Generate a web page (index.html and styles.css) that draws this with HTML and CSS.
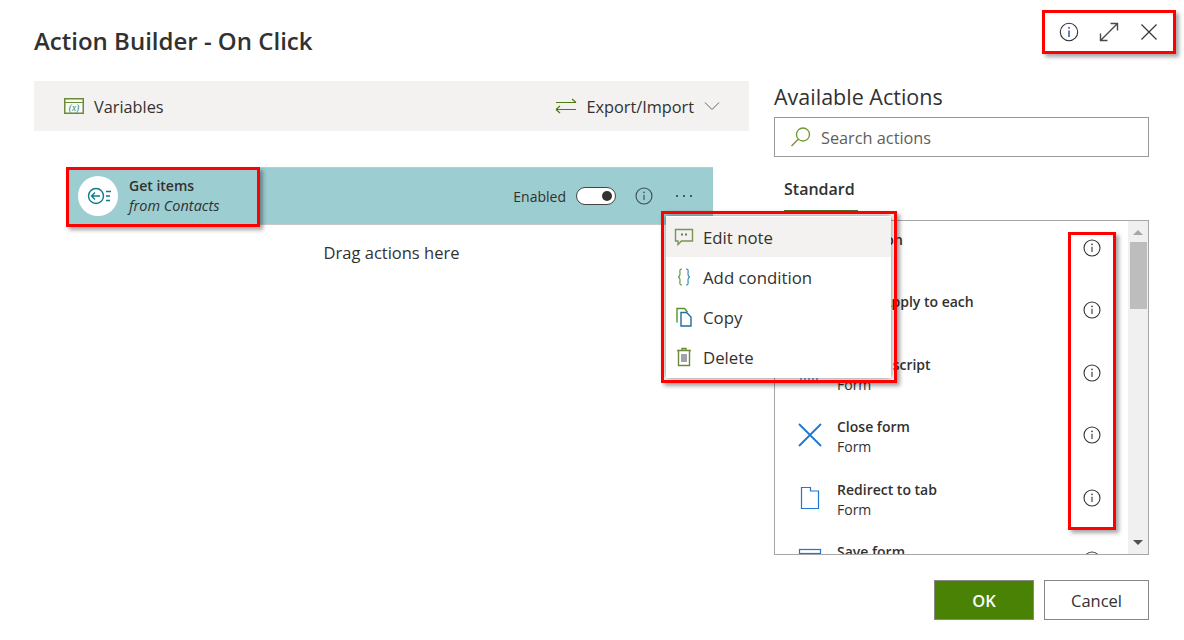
FILE: index.html
```html
<!DOCTYPE html>
<html lang="en">
<head>
<meta charset="utf-8">
<title>Action Builder - On Click</title>
<link rel="stylesheet" href="styles.css">
</head>
<body>
<div class="dialog">
  <header class="head">
    <h1 class="title">Action Builder - On Click</h1>
    <div class="head-tools">
      <svg class="ic24" viewBox="0 0 24 24"><circle cx="12" cy="12" r="8.700" fill="none" stroke="#333" stroke-width="1.100"/><path d="M12 10.500v6.500" stroke="#1f3a8a" stroke-width="1.300"/><circle cx="12" cy="7.800" r=".9" fill="#1f3a8a"/></svg>
      <svg class="ic24" viewBox="0 0 24 24"><path d="M3.500 20.500 20.500 3.500M13.500 3.500h7v7M3.500 13.500v7h7" fill="none" stroke="#4a4a42" stroke-width="1.400"/></svg>
      <svg class="ic24" viewBox="0 0 24 24"><path d="M4.500 4.500l15 15M19.500 4.500l-15 15" fill="none" stroke="#333" stroke-width="1.200"/></svg>
    </div>
  </header>

  <main class="body">
    <section class="left">
      <div class="toolbar">
        <div class="tool">
          <svg class="ic-var" viewBox="0 0 20 16"><rect x=".75" y=".75" width="18.500" height="14.500" fill="#fafaf5" stroke="#6b8a3a" stroke-width="1.500"/><path d="M1 4.500h18" stroke="#6b8a3a"/><text x="10" y="12.500" text-anchor="middle" class="var-x">(x)</text></svg>
          <span class="tool-label">Variables</span>
        </div>
        <div class="tool">
          <svg class="ic-swap" viewBox="0 0 22 16"><path d="M1 4.500h20M17 1l4 3.500M21 11.500H1M5 8l-4 3.500M5 15l-4-3.500" fill="none" stroke="#4a7c10" stroke-width="1.200"/></svg>
          <span class="tool-label">Export/Import</span>
          <svg class="ic-chev" viewBox="0 0 16 10"><path d="M1 1.500l7 7 7-7" fill="none" stroke="#666" stroke-width="1"/></svg>
        </div>
      </div>

      <div class="card">
        <div class="card-badge">
          <svg class="ic-get" viewBox="0 0 26 20"><circle cx="10" cy="10" r="7.500" fill="none" stroke="#0f7b8a" stroke-width="1.400"/><path d="M14 10H6M9 6.500 5.500 10 9 13.500" fill="none" stroke="#0f7b8a" stroke-width="1.400"/><path d="M20 5.500h5M20 10h4M20 14.500h4" stroke="#0f7b8a" stroke-width="1.400"/></svg>
        </div>
        <div class="card-text">
          <div class="card-name">Get items</div>
          <div class="card-sub">from Contacts</div>
        </div>
        <div class="card-tools">
          <span class="enabled">Enabled</span>
          <span class="toggle"><span class="knob"></span></span>
          <svg class="ic-info" viewBox="0 0 20 20"><circle cx="10" cy="10" r="8" fill="none" stroke="#3c4a55" stroke-width="1.100"/><path d="M10 8.800v5.200" stroke="#3c4a55" stroke-width="1.100"/><circle cx="10" cy="6.400" r=".8" fill="#3c4a55"/></svg>
          <span class="dots"><i></i><i></i><i></i></span>
        </div>
      </div>
      <p class="drop">Drag actions here</p>
    </section>

    <aside class="right">
      <h2 class="avail">Available Actions</h2>
      <div class="search">
        <svg class="ic-search" viewBox="0 0 22 22"><circle cx="13" cy="8.500" r="6.500" fill="none" stroke="#6b9a2a" stroke-width="1.300"/><path d="M8.500 13 1.500 20" stroke="#8a8a30" stroke-width="1.500"/></svg>
        <span class="tool-label">Search actions</span>
      </div>
      <div class="tabs"><span class="tab">Standard</span></div>
      <div class="list">
        <div class="rows">
          <div class="row">
            <span class="row-icon"></span>
            <div class="row-text"><div class="row-name">Condition</div><div class="row-sub">Control</div></div>
            <svg class="ic-info" viewBox="0 0 20 20"><circle cx="10" cy="10" r="8" fill="none" stroke="#333" stroke-width="1.100"/><path d="M10 8.800v5.200" stroke="#333" stroke-width="1.100"/><circle cx="10" cy="6.400" r=".8" fill="#333"/></svg>
          </div>
          <div class="row">
            <span class="row-icon"></span>
            <div class="row-text"><div class="row-name">Loop - Apply to each</div><div class="row-sub">Control</div></div>
            <svg class="ic-info" viewBox="0 0 20 20"><circle cx="10" cy="10" r="8" fill="none" stroke="#333" stroke-width="1.100"/><path d="M10 8.800v5.200" stroke="#333" stroke-width="1.100"/><circle cx="10" cy="6.400" r=".8" fill="#333"/></svg>
          </div>
          <div class="row">
            <span class="row-icon"><svg class="ic-row" viewBox="0 0 24 24"><path d="M3 17v3M7 17v3M11 17v3M15 17v3M19 17v3" stroke="#2f7fd8" stroke-width="1.300"/><path d="M1 21.500h21" stroke="#8aa6d8" stroke-width="1.300"/></svg></span>
            <div class="row-text"><div class="row-name">Custom script</div><div class="row-sub">Form</div></div>
            <svg class="ic-info" viewBox="0 0 20 20"><circle cx="10" cy="10" r="8" fill="none" stroke="#333" stroke-width="1.100"/><path d="M10 8.800v5.200" stroke="#333" stroke-width="1.100"/><circle cx="10" cy="6.400" r=".8" fill="#333"/></svg>
          </div>
          <div class="row">
            <span class="row-icon"><svg class="ic-row" viewBox="0 0 24 24"><path d="M1 1l22 22M23 1 1 23" fill="none" stroke="#1a78d6" stroke-width="1.800"/></svg></span>
            <div class="row-text"><div class="row-name">Close form</div><div class="row-sub">Form</div></div>
            <svg class="ic-info" viewBox="0 0 20 20"><circle cx="10" cy="10" r="8" fill="none" stroke="#333" stroke-width="1.100"/><path d="M10 8.800v5.200" stroke="#333" stroke-width="1.100"/><circle cx="10" cy="6.400" r=".8" fill="#333"/></svg>
          </div>
          <div class="row">
            <span class="row-icon"><svg class="ic-row" viewBox="0 0 24 24"><path d="M3.500 1.500h9v3.500h8v17.500h-17z" fill="none" stroke="#1a78d6" stroke-width="1.200"/></svg></span>
            <div class="row-text"><div class="row-name">Redirect to tab</div><div class="row-sub">Form</div></div>
            <svg class="ic-info" viewBox="0 0 20 20"><circle cx="10" cy="10" r="8" fill="none" stroke="#333" stroke-width="1.100"/><path d="M10 8.800v5.200" stroke="#333" stroke-width="1.100"/><circle cx="10" cy="6.400" r=".8" fill="#333"/></svg>
          </div>
          <div class="row">
            <span class="row-icon"><svg class="ic-row" viewBox="0 0 24 24"><rect x="1.500" y="1.500" width="21" height="21" fill="none" stroke="#1a78d6" stroke-width="1.200"/><path d="M1.500 5.500h21" stroke="#1a78d6" stroke-width="1.200"/></svg></span>
            <div class="row-text"><div class="row-name">Save form</div><div class="row-sub">Form</div></div>
            <svg class="ic-info" viewBox="0 0 20 20"><circle cx="10" cy="10" r="8" fill="none" stroke="#333" stroke-width="1.100"/><path d="M10 8.800v5.200" stroke="#333" stroke-width="1.100"/><circle cx="10" cy="6.400" r=".8" fill="#333"/></svg>
          </div>
        </div>
        <div class="scrollbar">
          <span class="arrow-up"></span>
          <span class="thumb"></span>
          <span class="arrow-down"></span>
        </div>
      </div>
    </aside>
  </main>

  <footer class="foot">
    <button class="btn btn-ok">OK</button>
    <button class="btn">Cancel</button>
  </footer>
</div>

<ul class="menu">
  <li class="menu-item is-hover">
    <svg class="ic-menu" viewBox="0 0 20 20"><path d="M1.500 2.500h17v11.500H7.500l-3.500 3.500V14H1.500z" fill="none" stroke="#7a9455" stroke-width="1.400"/><path d="M8 6.500v2M12 6.500v2" stroke="#3f5f28" stroke-width="1.600"/></svg>
    Edit note
  </li>
  <li class="menu-item">
    <svg class="ic-menu" viewBox="0 0 20 20"><path d="M8 2C5 2 6 4.500 6 7c0 2-1.500 3-2 3 .5 0 2 1 2 3 0 2.500-1 5 2 5" fill="none" stroke="#6b9a3a" stroke-width="1.200"/><path d="M12 2c3 0 2 2.500 2 5 0 2 1.500 3 2 3-.5 0-2 1-2 3 0 2.500 1 5-2 5" fill="none" stroke="#3a8fb0" stroke-width="1.200"/></svg>
    Add condition
  </li>
  <li class="menu-item">
    <svg class="ic-menu" viewBox="0 0 20 20"><path d="M3 15.500V1.500h7.500l3 3.500" fill="none" stroke="#5a9228" stroke-width="1.400"/><path d="M7 5.500h5.500l4.500 4.500v9H7z" fill="#fff" stroke="#1f6f9a" stroke-width="1.400"/></svg>
    Copy
  </li>
  <li class="menu-item">
    <svg class="ic-menu" viewBox="0 0 20 20"><path d="M3 3.500h14M8 3.500V1.500h4v2" fill="none" stroke="#6b8a3a" stroke-width="1.400"/><path d="M4.500 4v14.500h11V4" fill="none" stroke="#6b8a3a" stroke-width="1.400"/><path d="M8 7v8M10 7v8M12 7v8" stroke="#556" stroke-width="1.100"/></svg>
    Delete
  </li>
</ul>

<span class="mark mark-tools"></span>
<span class="mark mark-card"></span>
<span class="mark mark-menu"></span>
<span class="mark mark-info"></span>
</body>
</html>
```
FILE: styles.css
```css
* { box-sizing: border-box; }
html, body { margin: 0; height: 100%; }
body {
  position: relative;
  width: 1184px;
  height: 640px;
  overflow: hidden;
  background: #fff;
  color: #323130;
  font-family: "Open Sans", "Noto Sans", sans-serif;
}
svg { display: block; flex: none; }

.dialog { display: flex; flex-direction: column; height: 640px; padding: 0 35px 0 34px; }

.head { display: flex; justify-content: space-between; height: 81px; }
.title { margin: 26px 0 0; font-size: 24px; line-height: 30px; font-weight: 600; }
.head-tools { display: flex; gap: 16px; margin: 20px -12px 0 0; }
.ic24 { width: 24px; height: 24px; }

.body { display: flex; gap: 25px; height: 474px; }
.left { width: 715px; }
.right { width: 375px; }

.toolbar { display: flex; justify-content: space-between; align-items: center; height: 50px; padding: 0 29px 0 30px; background: #f3f2f1; font-size: 16.300px; }
.tool { display: flex; align-items: center; }
.tool-label { padding-top: 2px; }
.ic-var { width: 20px; height: 16px; margin-right: 10px; }
.var-x { font: italic 9.500px "Liberation Serif", serif; fill: #3f7f70; }
.ic-swap { width: 22px; height: 16px; margin-right: 9px; }
.ic-chev { width: 16px; height: 10px; margin-left: 10px; }

.card { display: flex; align-items: center; width: 645px; height: 58px; margin: 36px 0 0 34px; background: #9ccdd0; border-top: 1px solid #c8c8c8; border-bottom: 1px solid #c8c8c8; padding: 0 21px 0 10px; }
.card-badge { display: flex; align-items: center; justify-content: center; width: 40px; height: 40px; border-radius: 50%; background: #fff; }
.ic-get { width: 26px; height: 20px; margin-left: 2px; }
.card-text { margin-left: 11px; }
.card-name { font-size: 14px; line-height: 20px; font-weight: 600; }
.card-sub { font-size: 14.500px; line-height: 20px; font-style: italic; }
.card-tools { display: flex; align-items: center; margin-left: auto; }
.enabled { font-size: 14px; margin-right: 10px; }
.toggle { display: flex; align-items: center; justify-content: flex-end; width: 40px; height: 18px; padding-right: 3px; background: #fff; border: 1px solid #444; border-radius: 9px; }
.knob { width: 10px; height: 10px; border-radius: 50%; background: #333; }
.card-tools .ic-info { margin: 0 0 0 18px; }
.dots { display: flex; gap: 5px; margin-left: 22px; }
.dots i { width: 2px; height: 2px; background: #333; border-radius: 50%; }
.ic-info { width: 20px; height: 20px; }

.drop { margin: 17px 0 0; text-align: center; font-size: 16.500px; line-height: 22px; }

.avail { margin: 1px 0 0; font-size: 21.500px; line-height: 30px; font-weight: 400; }
.search { display: flex; align-items: center; height: 40px; margin-top: 5px; padding-left: 15px; border: 1px solid #999; font-size: 16.300px; color: #605e5c; }
.ic-search { width: 22px; height: 22px; margin-right: 9px; }

.tabs { height: 63px; padding: 20px 0 0 10px; }
.tab { display: block; width: 74px; height: 36px; border-bottom: 3px solid #51702f; font-size: 16px; line-height: 24px; font-weight: 600; white-space: nowrap; }

.list { display: flex; height: 335px; border: 1px solid #a6a6a6; overflow: hidden; }
.rows { flex: 1; min-width: 0; overflow: hidden; }
.row { display: flex; height: 62.400px; padding: 9px 26px 0 23px; }
.row-icon { flex: none; width: 24px; height: 24px; margin: 6px 15px 0 0; }
.ic-row { width: 24px; height: 24px; }
.row-text { flex: 1; font-size: 14px; line-height: 20px; }
.row-name { font-weight: 600; }
.row .ic-info { margin-top: 8px; }

.scrollbar { display: flex; flex-direction: column; align-items: center; width: 20px; background: #f0f0f0; }
.arrow-up { width: 0; height: 0; margin-top: 9px; border: 5px solid transparent; border-top: 0; border-bottom: 5px solid #a6a6a6; }
.thumb { width: 17px; height: 67px; margin-top: 7px; background: #bdbdbd; }
.arrow-down { width: 0; height: 0; margin-top: auto; margin-bottom: 9px; border: 5px solid transparent; border-bottom: 0; border-top: 5px solid #505050; }

.foot { display: flex; justify-content: flex-end; gap: 10px; padding-top: 25px; }
.btn { width: 105px; height: 40px; padding: 0; background: #fff; border: 1px solid #8a8886; color: #323130; font: 500 16.500px "Open Sans", sans-serif; }
.btn-ok { width: 100px; background: #498205; color: #fff; font-weight: 600; }

.menu { position: absolute; left: 666px; top: 216px; width: 225px; height: 162px; margin: 0; padding: 1px 0 0; list-style: none; background: #fff; box-shadow: 0 0 6px rgba(0,0,0,.55); font-size: 16.800px; }
.menu-item { display: flex; align-items: center; height: 40px; padding-left: 8px; }
.menu-item.is-hover { background: #f3f2f1; }
.ic-menu { width: 20px; height: 20px; margin-right: 9px; }

.mark { position: absolute; border: 3px solid #f00; box-shadow: 3px 3px 4px rgba(0,0,0,.35); pointer-events: none; }
.mark-tools { left: 1042px; top: 10px; width: 134px; height: 44px; }
.mark-card { left: 66px; top: 167px; width: 194px; height: 60px; }
.mark-menu { left: 661px; top: 211px; width: 236px; height: 172px; }
.mark-info { left: 1068px; top: 232px; width: 48px; height: 298px; }
```
